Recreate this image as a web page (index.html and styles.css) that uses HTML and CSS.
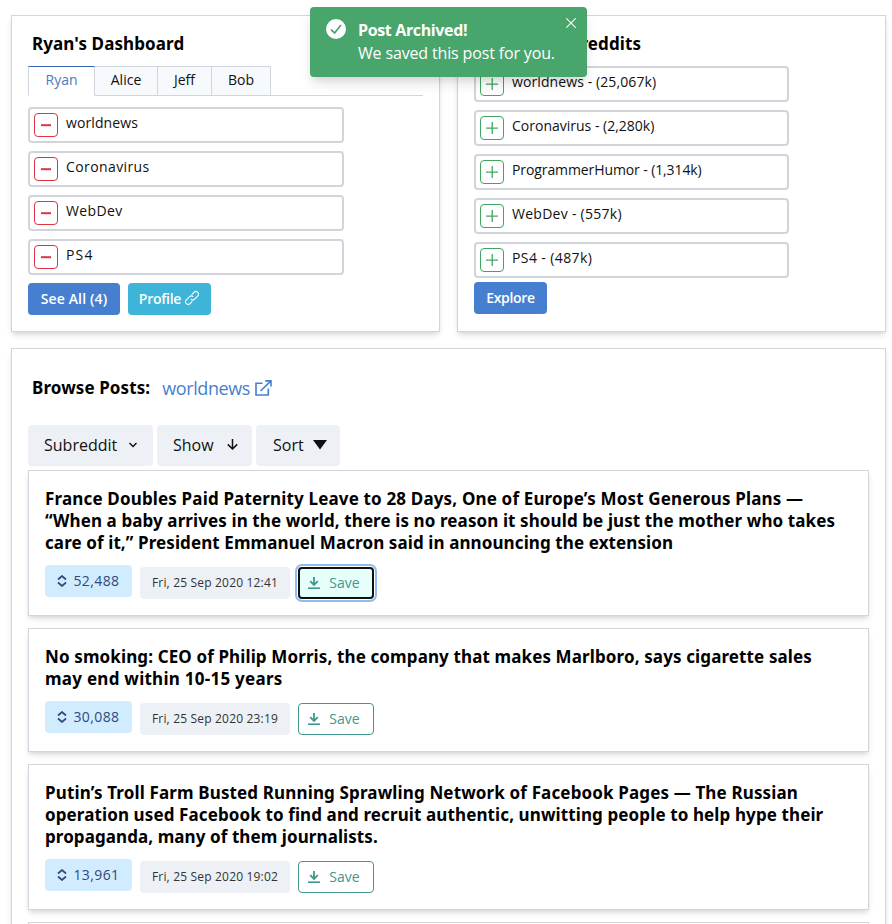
FILE: index.html
```html
<!DOCTYPE html>
<html lang="en">
<head>
<meta charset="utf-8">
<title>Ryan's Dashboard</title>
<link rel="stylesheet" href="styles.css">
</head>
<body>
<svg class="defs" width="0" height="0">
  <symbol id="minus" viewBox="0 0 10 10"><path d="M0 5.2h10" stroke="currentColor" stroke-width="2" fill="none"/></symbol>
  <symbol id="plus" viewBox="0 0 12 12"><path d="M0 6.2h12M6.2 0v12" stroke="currentColor" stroke-width="1.3" fill="none"/></symbol>
  <symbol id="updown" viewBox="0 0 10 12"><path d="M1 4.5 5 1l4 3.5M1 7.5 5 11l4-3.5" stroke="currentColor" stroke-width="1.7" fill="none"/></symbol>
  <symbol id="download" viewBox="0 0 12 12"><path d="M6 0v7.5M2.2 4.2 6 8l3.8-3.8" stroke="currentColor" stroke-width="1.8" fill="none"/><path d="M0 11.2h12" stroke="currentColor" stroke-width="1.6"/></symbol>
</svg>

<div class="toast" role="alert">
  <svg class="toast-icon" viewBox="0 0 20 20"><circle cx="10" cy="10" r="10" fill="#fff"/><path d="M5 10.7 8.6 14 15 6" fill="none" stroke="#48a56b" stroke-width="1.7"/></svg>
  <div class="toast-text"><strong>Post Archived!</strong><p>We saved this post for you.</p></div>
  <svg class="toast-close" viewBox="0 0 10 10"><path d="M.3.3l9.4 9.4M9.7.3.3 9.7" stroke="#fff" stroke-width="1.1"/></svg>
</div>

<main class="page">
  <div class="top">
    <section class="card dash">
      <h2 class="title">Ryan's Dashboard</h2>
      <nav class="tabs">
        <a class="tab active t1">Ryan</a><a class="tab t2">Alice</a><a class="tab t3">Jeff</a><a class="tab t4">Bob</a>
      </nav>
      <ul class="list">
        <li><button class="sq red"><svg width="10" height="10"><use href="#minus"/></svg></button><span>worldnews</span></li>
        <li><button class="sq red"><svg width="10" height="10"><use href="#minus"/></svg></button><span class="loose">Coronavirus</span></li>
        <li><button class="sq red"><svg width="10" height="10"><use href="#minus"/></svg></button><span class="loose">WebDev</span></li>
        <li><button class="sq red"><svg width="10" height="10"><use href="#minus"/></svg></button><span class="wide">PS4</span></li>
      </ul>
      <div class="actions">
        <button class="btn blue see">See All (4)</button>
        <button class="btn cyan profile">Profile <svg width="16" height="16" viewBox="0 0 16 16"><g fill="none" stroke="currentColor" stroke-width="1.1" transform="translate(8 8) rotate(-45)"><path d="M-2.2 2.6H-5.4a2.6 2.6 0 0 1 0-5.2H-.8A2.6 2.6 0 0 1 1.7 0"/><path d="M2.2-2.6H5.4a2.6 2.6 0 0 1 0 5.2H.8A2.6 2.6 0 0 1-1.7 0"/></g></svg></button>
      </div>
    </section>
    <section class="card">
      <h2 class="title">Popular Subreddits</h2>
      <ul class="list">
        <li><button class="sq green"><svg width="12" height="12"><use href="#plus"/></svg></button><span>worldnews - (25,067k)</span></li>
        <li><button class="sq green"><svg width="12" height="12"><use href="#plus"/></svg></button><span class="snug">Coronavirus - (2,280k)</span></li>
        <li><button class="sq green"><svg width="12" height="12"><use href="#plus"/></svg></button><span class="tight">ProgrammerHumor - (1,314k)</span></li>
        <li><button class="sq green"><svg width="12" height="12"><use href="#plus"/></svg></button><span class="airy">WebDev - (557k)</span></li>
        <li><button class="sq green"><svg width="12" height="12"><use href="#plus"/></svg></button><span class="loose">PS4 - (487k)</span></li>
      </ul>
      <button class="btn blue explore">Explore</button>
    </section>
  </div>

  <section class="card browse">
    <div class="browse-head">
      <h2 class="title">Browse Posts:</h2>
      <a class="sub"><span>worldnews</span><svg width="17" height="16" viewBox="0 0 17 16"><path d="M7.5 3.2H1V15h12.3V8.5M5.5 11 16 .9M10.3.9H16v5.6" fill="none" stroke="currentColor" stroke-width="1.6"/></svg></a>
    </div>
    <div class="filters">
      <button class="filter f1"><span>Subreddit</span><svg width="8" height="6" viewBox="0 0 8 6"><path d="M.5 1 4 4.6 7.5 1" fill="none" stroke="currentColor" stroke-width="1.4"/></svg></button>
      <button class="filter f2"><span>Show</span><svg width="11" height="11" viewBox="0 0 11 11"><path d="M5.5 0v10M.8 5.4 5.5 10l4.7-4.6" fill="none" stroke="currentColor" stroke-width="1.5"/></svg></button>
      <button class="filter f3"><span>Sort</span><svg width="14" height="10" viewBox="0 0 14 10"><path d="M0 0h14L7 9.6z" fill="currentColor"/></svg></button>
    </div>
    <article class="post">
      <h3><span class="p1">France Doubles Paid Paternity Leave to 28 Days, One of Europe’s Most Generous Plans —</span><br><span class="p2">“When a baby arrives in the world, there is no reason it should be just the mother who takes</span><br><span class="p3">care of it,” President Emmanuel Macron said in announcing the extension</span></h3>
      <div class="meta"><span class="votes"><svg width="10" height="12"><use href="#updown"/></svg>52,488</span><span class="date">Fri, 25 Sep 2020 12:41</span><button class="save focused"><svg width="12" height="12"><use href="#download"/></svg>Save</button></div>
    </article>
    <article class="post">
      <h3><span class="p4">No smoking: CEO of Philip Morris, the company that makes Marlboro, says cigarette sales</span><br><span class="p5">may end within 10-15 years</span></h3>
      <div class="meta"><span class="votes"><svg width="10" height="12"><use href="#updown"/></svg>30,088</span><span class="date">Fri, 25 Sep 2020 23:19</span><button class="save"><svg width="12" height="12"><use href="#download"/></svg>Save</button></div>
    </article>
    <article class="post">
      <h3><span class="p6">Putin’s Troll Farm Busted Running Sprawling Network of Facebook Pages — The Russian</span><br><span class="p7">operation used Facebook to find and recruit authentic, unwitting people to help hype their</span><br><span class="p8">propaganda, many of them journalists.</span></h3>
      <div class="meta"><span class="votes"><svg width="10" height="12"><use href="#updown"/></svg>13,961</span><span class="date">Fri, 25 Sep 2020 19:02</span><button class="save"><svg width="12" height="12"><use href="#download"/></svg>Save</button></div>
    </article>
    <article class="post"></article>
  </section>
</main>
</body>
</html>
```
FILE: styles.css
```css
* { box-sizing: border-box; margin: 0; padding: 0; }
html, body { height: 924px; overflow: hidden; }
body { background: #fff; color: #111; font-family: "Open Sans", "Noto Sans", sans-serif; font-size: 14px; white-space: nowrap; }
button { font: inherit; color: inherit; border: 0; background: none; }
svg { flex: none; }
.defs { position: absolute; }
.page { height: 924px; overflow: hidden; padding: 15px 6px 0 11px; }
.top { display: grid; grid-template-columns: 1fr 1fr; gap: 17px; margin-bottom: 16px; }
.card { height: 317px; border: 1px solid #d1d5dd; padding: 16px; box-shadow: 0 4px 6px -1px rgba(0,0,0,.12), 0 2px 4px -1px rgba(0,0,0,.06); }
.title { font-size: 17px; font-weight: 700; line-height: 24px; color: #000; margin-left: 4px; font-family: "Noto Sans", sans-serif; letter-spacing: .1px; }
.card > .title { height: 34px; }

.tabs { display: flex; height: 30px; border-bottom: 1px solid #d1d5dd; margin-bottom: 11px; }
.tab { height: 30px; line-height: 26px; text-align: center; border: 1px solid #d1d5dd; border-left: 0; background: #f7fafc; }
.tab.active { border-left: 1px solid #d1d5dd; border-top-color: #3a66b0; border-bottom-color: #fff; background: #fff; color: #5577bb; }
.t1 { width: 67px; } .t2 { width: 63px; } .t3 { width: 54px; } .t4 { width: 59px; }

.list { list-style: none; display: grid; gap: 8px; width: 316px; }
.list li { height: 36px; border: 2px solid #d1d5db; border-radius: 4px; display: flex; align-items: center; padding-left: 4px; gap: 8px; }
.card:not(.dash) .list { width: 315px; }
.list li span { line-height: 20px; padding-bottom: 4px; letter-spacing: .1px; }
.list li .loose { letter-spacing: .4px; }
.list li .wide { letter-spacing: 1.2px; }
.list li .airy { letter-spacing: .27px; }
.list li .snug { letter-spacing: 0; }
.list li .tight { letter-spacing: -.1px; }
.sq { width: 24px; height: 24px; border: 1px solid; border-radius: 4px; display: flex; align-items: center; justify-content: center; }
.red { color: #dc3545; }
.green { color: #41a564; }

.actions { display: flex; gap: 8px; margin-top: 8px; }
.btn { display: flex; align-items: center; justify-content: center; gap: 3px; height: 32px; border-radius: 4px; color: #fff; font-weight: 600; font-size: 14px; padding-bottom: 2px; }
.blue { background: #467fcf; }
.cyan { background: #3eb4d8; }
.see { width: 92px; letter-spacing: .15px; } .profile { width: 83px; letter-spacing: -.25px; } .explore { width: 73px; margin-top: 4px; letter-spacing: -.3px; }

.browse { height: 640px; }
.browse-head { display: flex; align-items: center; height: 46px; gap: 12px; }
.browse-head .title { margin-bottom: 1px; }
.sub { display: flex; align-items: center; gap: 5px; font-size: 18px; font-weight: 500; letter-spacing: -.4px; color: #467fcf; }
.filters { display: flex; gap: 4px; margin-top: 14px; }
.filter { height: 41px; border-radius: 4px; background: #edf0f5; display: flex; align-items: center; justify-content: space-between; font-size: 16px; padding-left: 16px; padding-bottom: 2px; }
.f1 { width: 125px; padding-right: 16px; } .f2 { width: 95px; padding-right: 14px; } .f3 { width: 84px; padding-left: 17px; padding-right: 13px; }

.post { border: 1px solid #d1d5dd; padding: 17px 16px 16px; margin-top: 4px; box-shadow: 0 4px 6px -1px rgba(0,0,0,.12), 0 2px 4px -1px rgba(0,0,0,.06); }
.post + .post { margin-top: 12px; }
.post:last-child { height: 100px; }
.post h3 { font-size: 17px; line-height: 22px; font-weight: 700; color: #000; font-family: "Noto Sans", sans-serif; }
.p1 { letter-spacing: .16px; } .p2, .p3 { letter-spacing: .1px; }
.p4 { letter-spacing: .12px; } .p5 { letter-spacing: .26px; }
.p6 { letter-spacing: .14px; } .p7 { letter-spacing: .11px; } .p8 { letter-spacing: .08px; }
.meta { display: flex; gap: 8px; align-items: flex-end; margin-top: 11px; height: 34px; }
.votes { align-self: flex-start; width: 87px; height: 32px; border-radius: 4px; background: #d1ecff; color: #33487c; display: flex; align-items: center; justify-content: center; gap: 6px; letter-spacing: .4px; padding-bottom: 1px; }
.date { width: 150px; height: 32px; line-height: 31px; text-align: center; border-radius: 4px; background: #edf0f5; font-size: 12px; letter-spacing: .18px; color: #333; }
.save { width: 76px; height: 32px; border: 1px solid #41968f; border-radius: 4px; color: #41968f; display: flex; align-items: center; justify-content: center; gap: 9px; padding: 0 4px 2px 0; }
.save svg { margin-top: 2px; }
.save.focused { border: 2px solid #111; background: #e6fffa; box-shadow: 0 0 0 1px #fff, 0 0 0 3px #90bcee; }

.toast { position: absolute; z-index: 2; left: 310px; top: 7px; width: 277px; height: 70px; border-radius: 4px; background: #48a56b; color: #fff; display: flex; padding: 12px 11px 0 16px; box-shadow: 0 8px 14px -3px rgba(0,0,0,.15), 0 4px 6px -2px rgba(0,0,0,.06); font-size: 16px; line-height: 23px; }
.toast-icon { width: 20px; height: 20px; margin-right: 12px; }
.toast-text { flex: 1; }
.toast-text strong { letter-spacing: -.36px; }
.toast-text p { letter-spacing: -.15px; }
.toast-close { width: 10px; height: 10px; margin: -1px 0 0; }
```
